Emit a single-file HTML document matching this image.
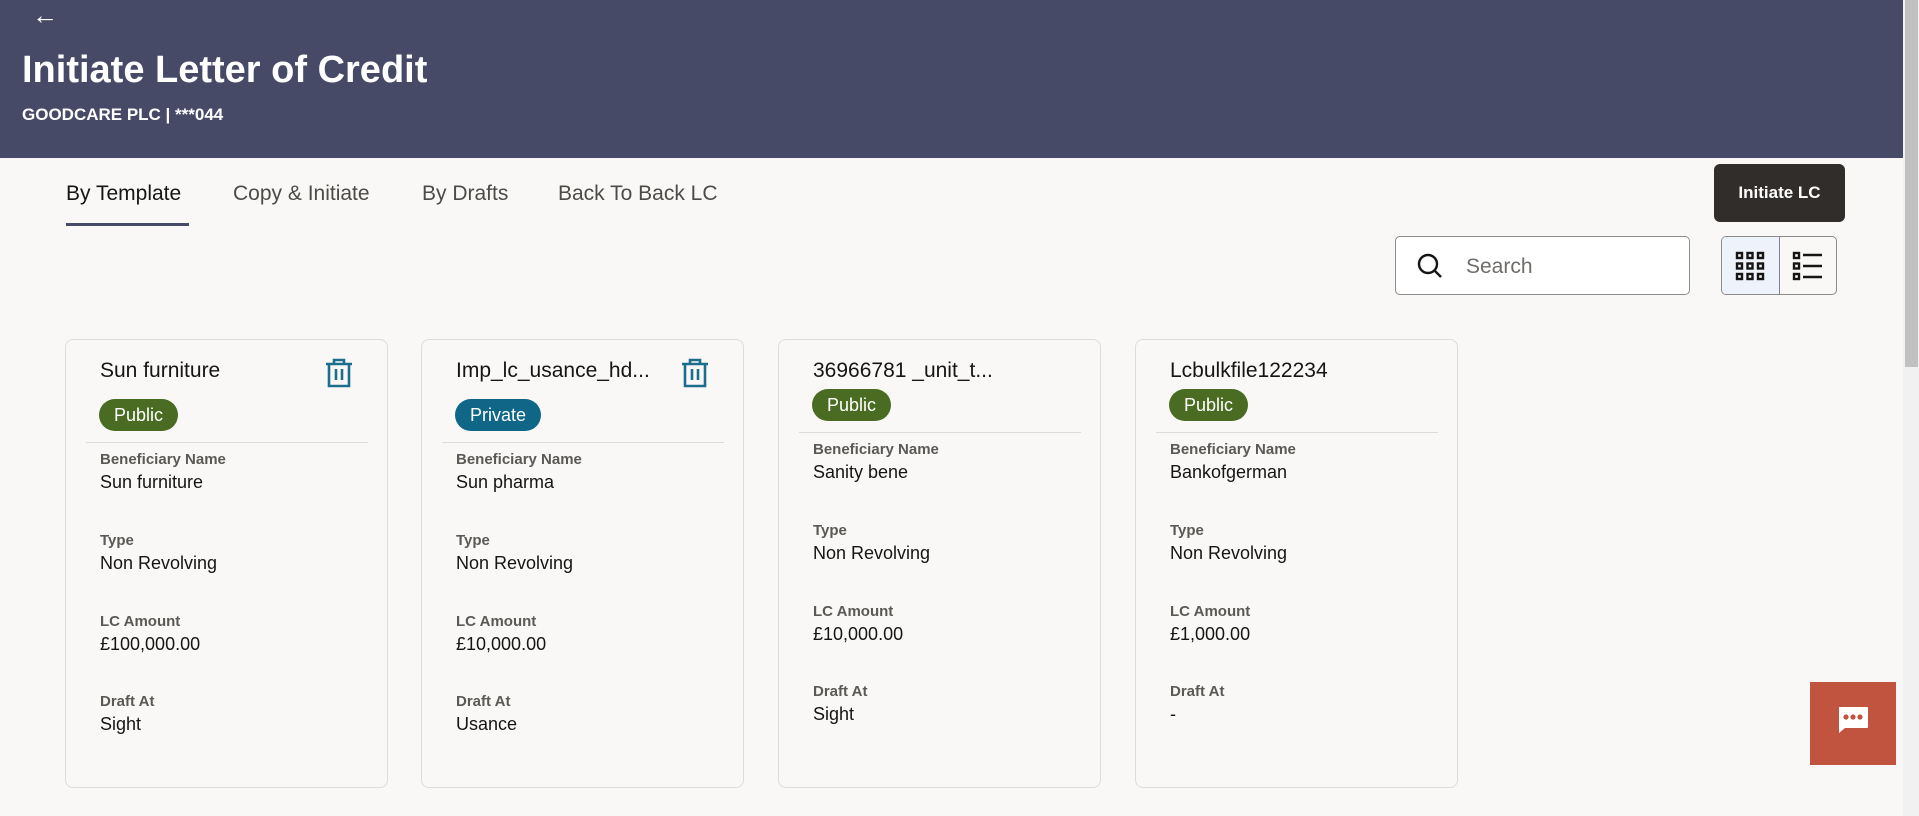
<!DOCTYPE html>
<html><head><meta charset="utf-8"><style>
*{margin:0;padding:0;box-sizing:border-box}
body{width:1919px;height:816px;overflow:hidden;background:#f9f8f6;font-family:"Liberation Sans",sans-serif;position:relative;color:#161513}
.abs{position:absolute}
.hdr{left:0;top:0;width:1903px;height:158px;background:#474a67}
.tab{top:182px;font-size:21px;color:#4d4b48;white-space:nowrap}
.card{position:absolute;top:339px;width:323px;height:449px;border:1px solid #dedcd9;border-radius:8px;background:#f9f8f6}
.ct{position:absolute;left:34px;font-size:21px;color:#161513}
.badge{position:absolute;left:33px;height:32px;border-radius:16px;color:#fff;font-size:18px;line-height:32px;padding:0 15px}
.div{position:absolute;left:20px;width:282px;height:1px;background:#dedcd9}
.lb{position:absolute;left:34px;font-size:15px;font-weight:bold;color:#5b5956}
.vl{position:absolute;left:34px;font-size:18px;color:#161513}
.trash{position:absolute;left:259px;top:18px}
</style></head><body>
<div class="abs hdr"></div>
<div class="abs" style="left:32px;top:0px;color:#fff;font-size:26px;font-weight:bold">&#8592;</div>
<div class="abs" style="left:22px;top:49px;color:#fff;font-size:38px;font-weight:bold">Initiate Letter of Credit</div>
<div class="abs" style="left:22px;top:105px;color:#fff;font-size:17px;font-weight:bold">GOODCARE PLC | ***044</div>
<div class="abs tab" style="left:66px;color:#161513">By Template</div>
<div class="abs" style="left:66px;top:223px;width:123px;height:3px;background:#474a67"></div>
<div class="abs tab" style="left:233px">Copy &amp; Initiate</div>
<div class="abs tab" style="left:422px">By Drafts</div>
<div class="abs tab" style="left:558px">Back To Back LC</div>
<div class="abs" style="left:1714px;top:164px;width:131px;height:58px;background:#312d2a;border-radius:6px;color:#fff;font-size:17px;font-weight:bold;line-height:58px;text-align:center">Initiate LC</div>
<div class="abs" style="left:1395px;top:236px;width:295px;height:59px;border:1px solid #8e8c89;border-radius:5px;background:#fff"></div>
<svg class="abs" style="left:1416px;top:252px" width="30" height="30" viewBox="0 0 30 30"><circle cx="12" cy="12" r="9" fill="none" stroke="#161513" stroke-width="2.4"/><line x1="18.5" y1="18.5" x2="25" y2="25" stroke="#161513" stroke-width="2.4"/></svg>
<div class="abs" style="left:1466px;top:255px;font-size:21px;color:#6f6c69">Search</div>
<div class="abs" style="left:1721px;top:236px;width:116px;height:59px;border:1px solid #8e8c89;border-radius:5px;background:#f9f8f6;overflow:hidden"><div style="width:58px;height:57px;background:#eef2fb;border-right:1px solid #7d8299"></div></div>
<svg class="abs" style="left:1735px;top:251px" width="30" height="30" viewBox="0 0 30 30" fill="none" stroke="#161513" stroke-width="2.4"><rect x="2" y="2" width="5" height="5"/><rect x="12.5" y="2" width="5" height="5"/><rect x="23" y="2" width="5" height="5"/><rect x="2" y="12.5" width="5" height="5"/><rect x="12.5" y="12.5" width="5" height="5"/><rect x="23" y="12.5" width="5" height="5"/><rect x="2" y="23" width="5" height="5"/><rect x="12.5" y="23" width="5" height="5"/><rect x="23" y="23" width="5" height="5"/></svg>
<svg class="abs" style="left:1792px;top:251px" width="30" height="30" viewBox="0 0 30 30" fill="none" stroke="#161513" stroke-width="2.4"><rect x="2" y="2" width="5" height="5"/><rect x="2" y="12.5" width="5" height="5"/><rect x="2" y="23" width="5" height="5"/><line x1="11" y1="4" x2="30" y2="4"/><line x1="11" y1="15" x2="30" y2="15"/><line x1="11" y1="26" x2="30" y2="26"/></svg>
<div class="abs" style="left:1903px;top:0;width:16px;height:816px;background:#f1f1f1"></div>
<div class="abs" style="left:1905px;top:0;width:13px;height:367px;background:#c1c1c1"></div>
<div class="abs" style="left:1810px;top:682px;width:86px;height:83px;background:#c0543f"></div>
<svg class="abs" style="left:1836px;top:705px" width="34" height="30" viewBox="0 0 34 30"><path d="M3 2h28a1 1 0 0 1 1 1v19a1 1 0 0 1-1 1H9l-6 5z" fill="#fff"/><circle cx="10" cy="12" r="2.6" fill="#c0543f"/><circle cx="17" cy="12" r="2.6" fill="#c0543f"/><circle cx="24" cy="12" r="2.6" fill="#c0543f"/></svg>

<div class="card" style="left:65px">
<div class="ct" style="top:19px">Sun furniture</div>
<svg class="trash" width="28" height="30" viewBox="0 0 28 30" fill="none" stroke="#1c6e8c" stroke-width="2.6"><line x1="1" y1="6" x2="27" y2="6"/><path d="M9 6V2h10v4"/><path d="M4 6v22h20V6"/><line x1="11" y1="11" x2="11" y2="22"/><line x1="17" y1="11" x2="17" y2="22"/></svg>
<div class="badge" style="top:59px;background:#4a6b22">Public</div>
<div class="div" style="top:102px"></div>
<div class="lb" style="top:111px">Beneficiary Name</div><div class="vl" style="top:132px">Sun furniture</div>
<div class="lb" style="top:192px">Type</div><div class="vl" style="top:213px">Non Revolving</div>
<div class="lb" style="top:273px">LC Amount</div><div class="vl" style="top:294px">£100,000.00</div>
<div class="lb" style="top:353px">Draft At</div><div class="vl" style="top:374px">Sight</div>
</div>

<div class="card" style="left:421px">
<div class="ct" style="top:19px">Imp_lc_usance_hd...</div>
<svg class="trash" width="28" height="30" viewBox="0 0 28 30" fill="none" stroke="#1c6e8c" stroke-width="2.6"><line x1="1" y1="6" x2="27" y2="6"/><path d="M9 6V2h10v4"/><path d="M4 6v22h20V6"/><line x1="11" y1="11" x2="11" y2="22"/><line x1="17" y1="11" x2="17" y2="22"/></svg>
<div class="badge" style="top:59px;background:#0f6687">Private</div>
<div class="div" style="top:102px"></div>
<div class="lb" style="top:111px">Beneficiary Name</div><div class="vl" style="top:132px">Sun pharma</div>
<div class="lb" style="top:192px">Type</div><div class="vl" style="top:213px">Non Revolving</div>
<div class="lb" style="top:273px">LC Amount</div><div class="vl" style="top:294px">£10,000.00</div>
<div class="lb" style="top:353px">Draft At</div><div class="vl" style="top:374px">Usance</div>
</div>

<div class="card" style="left:778px">
<div class="ct" style="top:19px">36966781 _unit_t...</div>
<div class="badge" style="top:49px;background:#4a6b22">Public</div>
<div class="div" style="top:92px"></div>
<div class="lb" style="top:101px">Beneficiary Name</div><div class="vl" style="top:122px">Sanity bene</div>
<div class="lb" style="top:182px">Type</div><div class="vl" style="top:203px">Non Revolving</div>
<div class="lb" style="top:263px">LC Amount</div><div class="vl" style="top:284px">£10,000.00</div>
<div class="lb" style="top:343px">Draft At</div><div class="vl" style="top:364px">Sight</div>
</div>

<div class="card" style="left:1135px">
<div class="ct" style="top:19px">Lcbulkfile122234</div>
<div class="badge" style="top:49px;background:#4a6b22">Public</div>
<div class="div" style="top:92px"></div>
<div class="lb" style="top:101px">Beneficiary Name</div><div class="vl" style="top:122px">Bankofgerman</div>
<div class="lb" style="top:182px">Type</div><div class="vl" style="top:203px">Non Revolving</div>
<div class="lb" style="top:263px">LC Amount</div><div class="vl" style="top:284px">£1,000.00</div>
<div class="lb" style="top:343px">Draft At</div><div class="vl" style="top:364px">-</div>
</div>
</body></html>
